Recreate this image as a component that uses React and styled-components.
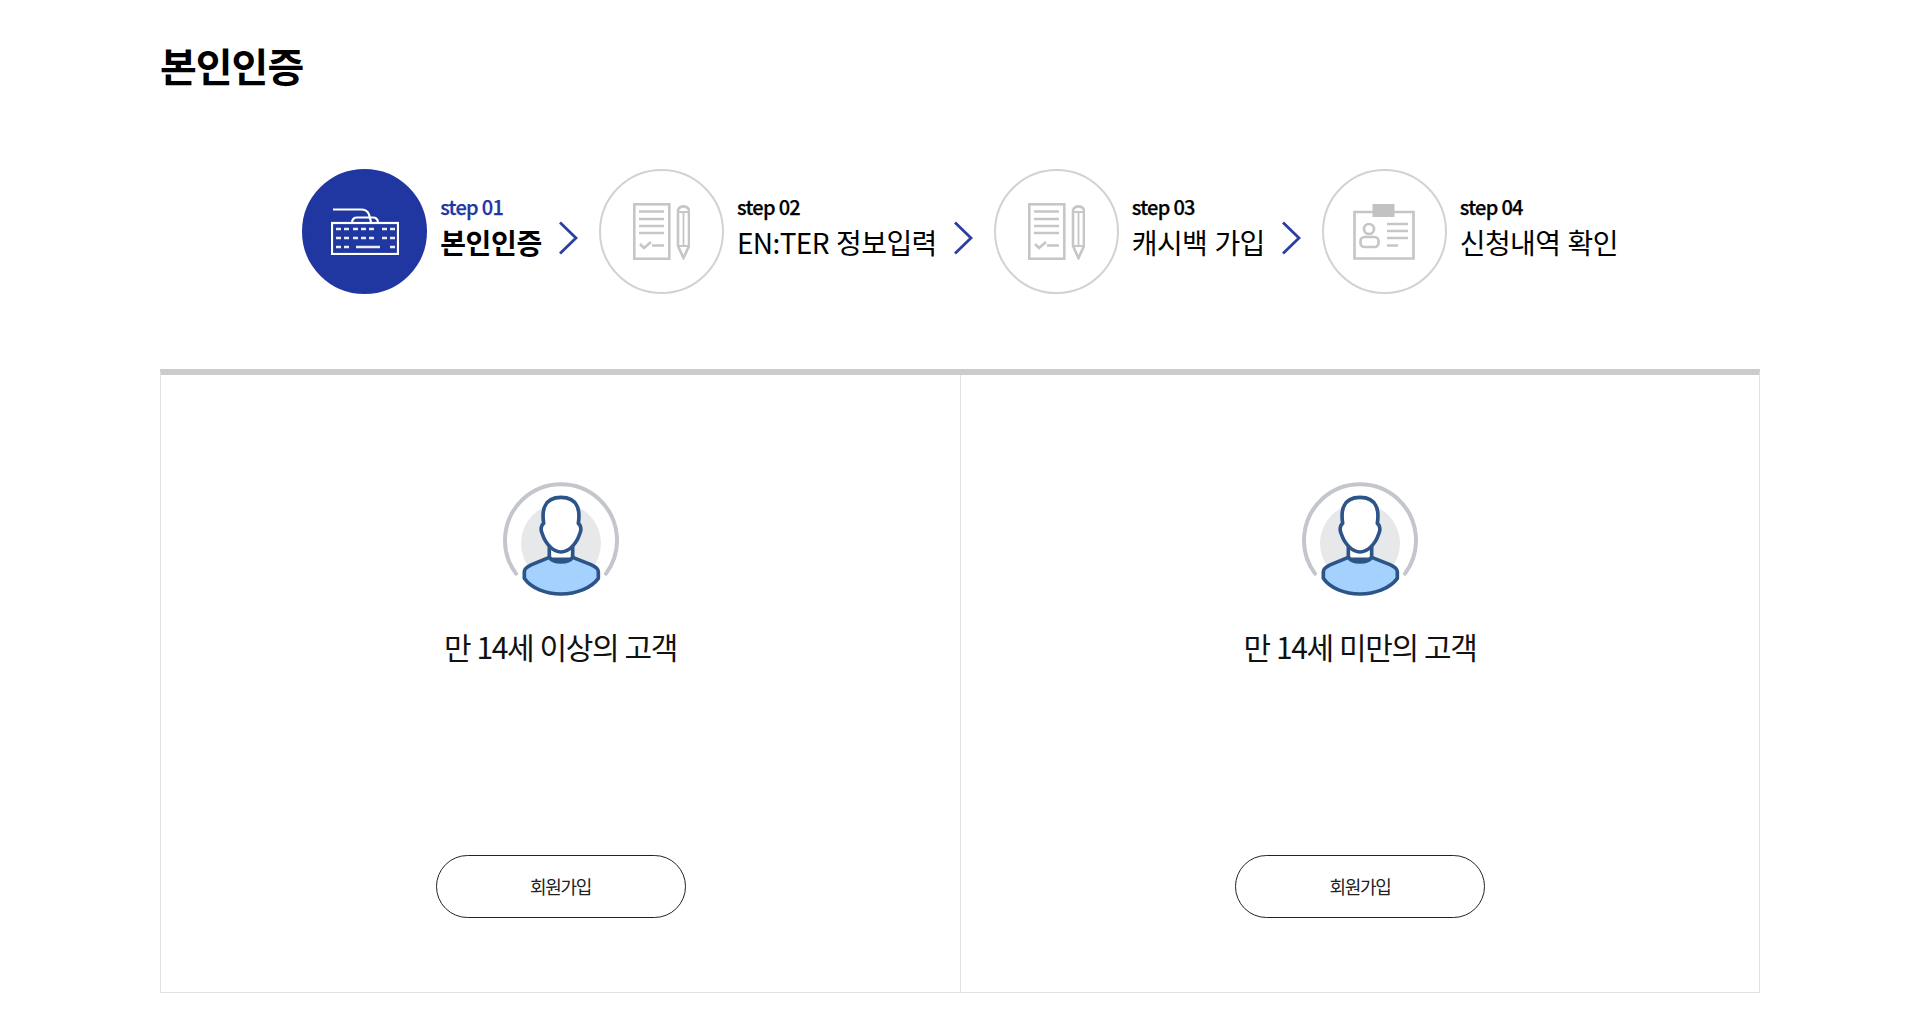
import React from 'react';
import styled, { createGlobalStyle } from 'styled-components';

const Global = createGlobalStyle`
  html, body { margin: 0; padding: 0; background: #fff; }
  body { font-family: "Noto Sans CJK KR", "Noto Sans", sans-serif; color: #000; }
  * { box-sizing: border-box; }
`;

const Page = styled.div`
  width: 1600px;
  margin: 0 auto;
  height: 1026px;
`;
const Title = styled.h1`
  margin: 0;
  padding-top: 36px;
  height: 169px;
  font-size: 40px;
  line-height: 58px;
  font-weight: 700;
  letter-spacing: -1px;
`;
const Steps = styled.ol`
  list-style: none;
  margin: 0;
  padding: 0;
  display: flex;
  justify-content: center;
  height: 200px;
`;
const Step = styled.li`
  display: flex;
  align-items: flex-start;
`;
const Circle = styled.div`
  width: 125px;
  height: 125px;
  border-radius: 50%;
  flex: none;
  display: flex;
  align-items: center;
  justify-content: center;
  background: ${p => (p.$active ? '#2037a1' : '#fff')};
  border: 2px solid ${p => (p.$active ? '#2037a1' : '#d2d2d2')};
`;
const StepText = styled.div`
  margin-left: 13px;
  padding-top: 25px;
`;
const StepNo = styled.div`
  font-size: 20px;
  line-height: 26px;
  font-weight: 500;
  letter-spacing: -0.7px;
  -webkit-text-stroke: 0.25px currentColor;
  color: ${p => (p.$active ? '#2037a1' : '#000')};
`;
const StepName = styled.div`
  font-size: 28px;
  line-height: 40px;
  letter-spacing: ${p => (p.$active ? '-0.3px' : '-0.6px')};
  word-spacing: 1.500px;
  margin-top: 2px;
  white-space: nowrap;
  font-weight: ${p => (p.$active ? 700 : 400)};
`;
const Chevron = styled.svg`
  width: 20px;
  height: 34px;
  flex: none;
  margin: 52px 21px 0 16px;
`;
const Panels = styled.div`
  display: grid;
  grid-template-columns: 1fr 1fr;
  height: 624px;
  border-top: 6px solid #ccc;
  border-left: 1px solid #e2e2e2;
  border-right: 1px solid #e2e2e2;
  border-bottom: 1px solid #e2e2e2;
`;
const Panel = styled.section`
  display: flex;
  flex-direction: column;
  align-items: center;
  padding-top: 105px;
  & + & { border-left: 1px solid #e2e2e2; }
`;
const Label = styled.p`
  margin: 27px 0 0;
  font-size: 30px;
  line-height: 44px;
  letter-spacing: -1.400px;
  word-spacing: 1px;
  color: #111;
`;
const JoinButton = styled.button`
  margin-top: 187px;
  width: 250px;
  height: 63px;
  padding: 0 0 2px;
  border-radius: 32px;
  border: 1px solid #222;
  background: #fff;
  font-family: inherit;
  font-size: 18px;
  letter-spacing: -1.300px;
  color: #222;
`;

const Keyboard = () => (
  <svg width="68" height="47" viewBox="0 0 68 47" fill="none" stroke="#fff" strokeWidth="2.200">
    <path d="M2 1.500H30c5 0 7 2 8 5l2 7.500" />
    <path d="M21 14c.5-3 2.500-4.500 5-4.500h16c2.500 0 4.500 1.500 5 4.500" />
    <rect x="1" y="15" width="66" height="31" />
    <g strokeWidth="2.400" opacity="0.9">
      <path d="M5 21h5M13 21h5M22 21h5M30 21h5M38 21h5M51 21h5M59 21h5" />
      <path d="M5 30h5M13 30h5M22 30h5M30 30h5M38 30h5M51 30h5M59 30h5" />
      <path d="M5 39h5M13 39h5M25 39h24M59 39h5" />
    </g>
  </svg>
);
const Form = () => (
  <svg width="57" height="57" viewBox="0 0 57 57" fill="none" stroke="#c6c6c6" strokeWidth="2.600">
    <rect x="1.300" y="1.300" width="35" height="54.500" />
    <path d="M6 8.500h25M6 16h25M6 23h25M6 30h25M19 42.500h12" />
    <path d="M7 41l4 4 7-6" />
    <path d="M45 7a6 6 0 0 1 11 0v36l-5.500 12L45 43z" />
    <path d="M45 9h11M45 43h11M50.500 9v34" strokeWidth="1.800" />
  </svg>
);
const Card = () => (
  <svg width="62" height="56" viewBox="0 0 62 56" fill="none" stroke="#c6c6c6" strokeWidth="2.700">
    <path d="M21 8H1.500v46.500h59V8H40" />
    <rect x="20" y="0.500" width="21" height="12" fill="#c2c2c2" stroke="#c2c2c2" strokeWidth="1" />
    <circle cx="16" cy="25" r="5" />
    <rect x="7.500" y="33" width="18" height="10" rx="4" />
    <path d="M34 20h21M34 27h21M34 34h21M34 41.500h11" />
  </svg>
);
const Person = () => (
  <svg width="120" height="117" viewBox="60 30 360 351" fill="none">
    <circle cx="240" cy="220" r="120" fill="#e7e8ea" />
    <path d="M105 311A168 168 0 1 1 375 311" stroke="#c3c6cc" strokeWidth="12" strokeLinecap="round" />
    <path d="M205 225V268H275V225z" fill="#fff" stroke="#2c5488" strokeWidth="11" />
    <path d="M188 160C185 140 186 120 192 108C200 90 220 82 240 82C260 82 280 90 288 108C294 120 295 140 292 160C300 165 302 180 296 192C285 225 262 245 240 246C218 245 195 225 184 192C178 180 180 165 188 160Z" fill="#fff" stroke="#2c5488" strokeWidth="11" strokeLinejoin="round" />
    <path d="M205 262C218 280 262 280 275 262L330 284C343 290 352 298 352 305V325C330 355 285 372 240 372C195 372 150 355 130 325V305C130 298 139 290 152 284Z" fill="#a4d1fd" stroke="#2c5488" strokeWidth="11" strokeLinejoin="round" />
  </svg>
);

const steps = [
  { no: 'step 01', name: '본인인증', icon: <Keyboard />, active: true },
  { no: 'step 02', name: 'EN:TER 정보입력', icon: <Form /> },
  { no: 'step 03', name: '캐시백 가입', icon: <Form /> },
  { no: 'step 04', name: '신청내역 확인', icon: <Card /> },
];

export default function App() {
  return (
    <Page>
      <Global />
      <Title>본인인증</Title>
      <Steps>
        {steps.map((s, i) => (
          <Step key={s.no}>
            <Circle $active={s.active}>{s.icon}</Circle>
            <StepText>
              <StepNo $active={s.active}>{s.no}</StepNo>
              <StepName $active={s.active}>{s.name}</StepName>
            </StepText>
            {i < steps.length - 1 && (
              <Chevron viewBox="0 0 20 34" fill="none" stroke="#2b3fa0" strokeWidth="2.800">
                <path d="M2 1.500L18 17 2 32.500" />
              </Chevron>
            )}
          </Step>
        ))}
      </Steps>
      <Panels>
        {['만 14세 이상의 고객', '만 14세 미만의 고객'].map(t => (
          <Panel key={t}>
            <Person />
            <Label>{t}</Label>
            <JoinButton>회원가입</JoinButton>
          </Panel>
        ))}
      </Panels>
    </Page>
  );
}
